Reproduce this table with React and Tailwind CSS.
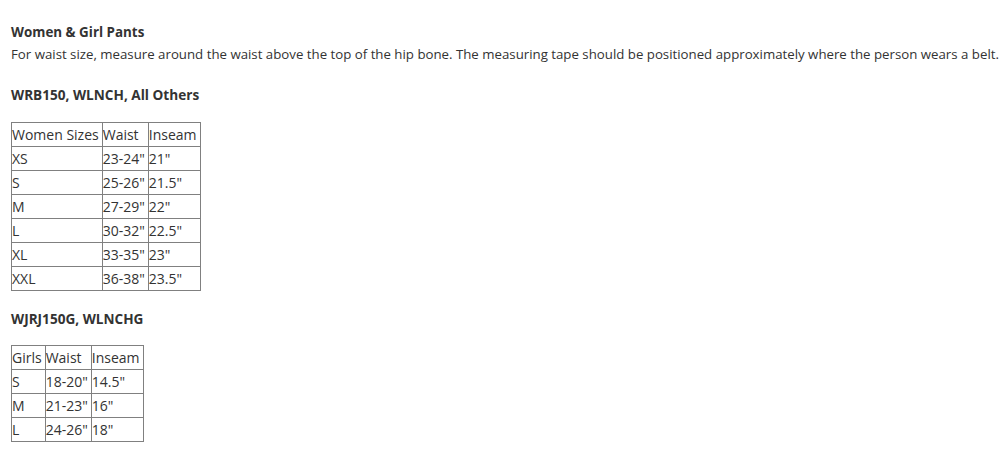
const women = [
  ['XS', '23-24"', '21"'],
  ['S', '25-26"', '21.5"'],
  ['M', '27-29"', '22"'],
  ['L', '30-32"', '22.5"'],
  ['XL', '33-35"', '23"'],
  ['XXL', '36-38"', '23.5"'],
]

const girls = [
  ['S', '18-20"', '14.5"'],
  ['M', '21-23"', '16"'],
  ['L', '24-26"', '18"'],
]

const SizeTable = ({ head, rows }) => (
  <table className="border-collapse border border-[#808080] text-[14px] leading-[23px]">
    <tbody>
      <tr>
        {head.map((h) => (
          <td key={h} className="border border-[#808080] p-0 pr-[3px] align-top">{h}</td>
        ))}
      </tr>
      {rows.map((r) => (
        <tr key={r[0]}>
          {r.map((c, i) => (
            <td key={i} className="border border-[#808080] p-0 pr-[3px] align-top">{c}</td>
          ))}
        </tr>
      ))}
    </tbody>
  </table>
)

export default function App() {
  return (
    <div className="bg-white min-h-[450px] px-[11px] pt-[23px] text-[#333] font-['Segoe_UI','Open_Sans',sans-serif]">
      <h4 className="text-[13.4px] font-bold leading-[18px]">Women &amp; Girl Pants</h4>
      <p className="text-[13.25px] leading-[20px] mt-[3px] whitespace-nowrap">
        For waist size, measure around the waist above the top of the hip bone. The measuring tape should be positioned approximately where the person wears a belt.
      </p>
      <h4 className="text-[13.6px] font-bold leading-[18px] mt-[22px] mb-[18px]">WRB150, WLNCH, All Others</h4>
      <SizeTable head={['Women Sizes', 'Waist', 'Inseam']} rows={women} />
      <h4 className="text-[13.6px] font-bold leading-[18px] mt-[19px] mb-[17px]">WJRJ150G, WLNCHG</h4>
      <SizeTable head={['Girls', 'Waist', 'Inseam']} rows={girls} />
    </div>
  )
}
